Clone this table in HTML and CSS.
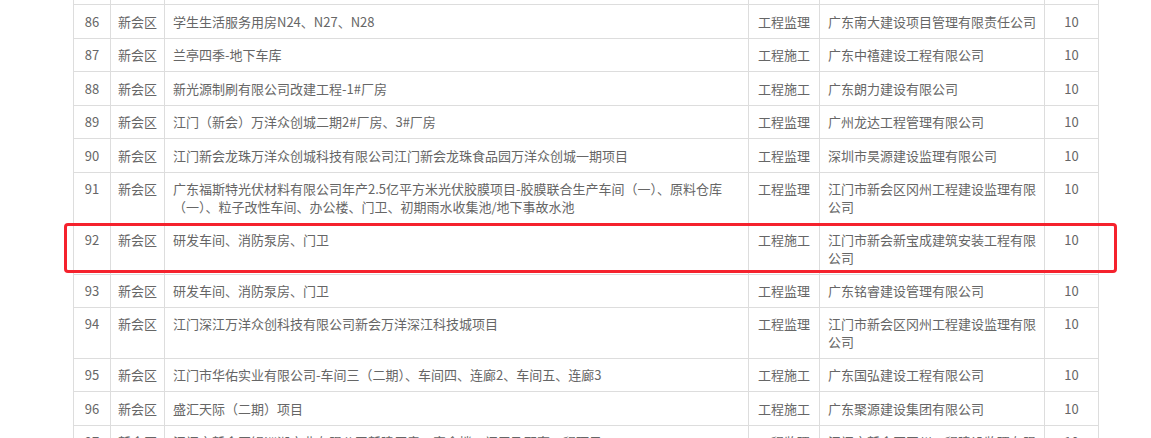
FILE: index.html
```html
<!DOCTYPE html>
<html lang="zh-CN">

<head>
    <meta charset="UTF-8">
    <meta name="viewport" content="width=device-width, initial-scale=1.0">
    <title>项目名单</title>
    <link rel="stylesheet" href="styles.css">
</head>

<body>
    <div class="list-wrap">
        <table class="list">
            <colgroup>
                <col class="c-no">
                <col class="c-area">
                <col class="c-name">
                <col class="c-type">
                <col class="c-company">
                <col class="c-score">
            </colgroup>
            <tbody>
                <tr>
                    <td class="center">85</td>
                    <td class="center">新会区</td>
                    <td>江门市新会区综合楼项目</td>
                    <td class="center">工程施工</td>
                    <td class="company">广东建设工程有限公司</td>
                    <td class="center">10</td>
                </tr>
                <tr>
                    <td class="center">86</td>
                    <td class="center">新会区</td>
                    <td>学生生活服务用房N24、N27、N28</td>
                    <td class="center">工程监理</td>
                    <td class="company">广东南大建设项目管理有限责任公司</td>
                    <td class="center">10</td>
                </tr>
                <tr>
                    <td class="center">87</td>
                    <td class="center">新会区</td>
                    <td>兰亭四季-地下车库</td>
                    <td class="center">工程施工</td>
                    <td class="company">广东中禧建设工程有限公司</td>
                    <td class="center">10</td>
                </tr>
                <tr>
                    <td class="center">88</td>
                    <td class="center">新会区</td>
                    <td>新光源制刷有限公司改建工程-1#厂房</td>
                    <td class="center">工程施工</td>
                    <td class="company">广东朗力建设有限公司</td>
                    <td class="center">10</td>
                </tr>
                <tr>
                    <td class="center">89</td>
                    <td class="center">新会区</td>
                    <td>江门（新会）万洋众创城二期2#厂房、3#厂房</td>
                    <td class="center">工程监理</td>
                    <td class="company">广州龙达工程管理有限公司</td>
                    <td class="center">10</td>
                </tr>
                <tr>
                    <td class="center">90</td>
                    <td class="center">新会区</td>
                    <td>江门新会龙珠万洋众创城科技有限公司江门新会龙珠食品园万洋众创城一期项目</td>
                    <td class="center">工程监理</td>
                    <td class="company">深圳市昊源建设监理有限公司</td>
                    <td class="center">10</td>
                </tr>
                <tr>
                    <td class="center">91</td>
                    <td class="center">新会区</td>
                    <td>广东福斯特光伏材料有限公司年产2.5亿平方米光伏胶膜项目-胶膜联合生产车间（一）、原料仓库（一）、粒子改性车间、办公楼、门卫、初期雨水收集池/地下事故水池</td>
                    <td class="center">工程监理</td>
                    <td class="company">江门市新会区冈州工程建设监理有限公司</td>
                    <td class="center">10</td>
                </tr>
                <tr>
                    <td class="center">92</td>
                    <td class="center">新会区</td>
                    <td>研发车间、消防泵房、门卫</td>
                    <td class="center">工程施工</td>
                    <td class="company">江门市新会新宝成建筑安装工程有限公司</td>
                    <td class="center">10</td>
                </tr>
                <tr>
                    <td class="center">93</td>
                    <td class="center">新会区</td>
                    <td>研发车间、消防泵房、门卫</td>
                    <td class="center">工程监理</td>
                    <td class="company">广东铭睿建设管理有限公司</td>
                    <td class="center">10</td>
                </tr>
                <tr>
                    <td class="center">94</td>
                    <td class="center">新会区</td>
                    <td>江门深江万洋众创科技有限公司新会万洋深江科技城项目</td>
                    <td class="center">工程监理</td>
                    <td class="company">江门市新会区冈州工程建设监理有限公司</td>
                    <td class="center">10</td>
                </tr>
                <tr>
                    <td class="center">95</td>
                    <td class="center">新会区</td>
                    <td>江门市华佑实业有限公司-车间三（二期）、车间四、连廊2、车间五、连廊3</td>
                    <td class="center">工程施工</td>
                    <td class="company">广东国弘建设工程有限公司</td>
                    <td class="center">10</td>
                </tr>
                <tr>
                    <td class="center">96</td>
                    <td class="center">新会区</td>
                    <td>盛汇天际（二期）项目</td>
                    <td class="center">工程施工</td>
                    <td class="company">广东聚源建设集团有限公司</td>
                    <td class="center">10</td>
                </tr>
                <tr>
                    <td class="center">97</td>
                    <td class="center">新会区</td>
                    <td>江门市新会区银洲湖实业有限公司新建厂房、宿舍楼、门卫及配套工程项目</td>
                    <td class="center">工程监理</td>
                    <td class="company">江门市新会区冈州工程建设监理有限公司</td>
                    <td class="center">10</td>
                </tr>
            </tbody>
        </table>
    </div>

    <!-- red mark around row 92 -->
    <div class="mark"></div>
</body>

</html>
```

FILE: styles.css
```css
body {
    margin: 0;
    padding: 0;
    background-color: #fff;
    font-family: "Noto Sans CJK SC", "Microsoft YaHei", sans-serif;
    font-size: 13px;
    color: #666;
    overflow: hidden;
}

.list-wrap {
    margin-top: -29px;
    margin-left: 73px;
    width: 1025px;
}

.list {
    width: 100%;
    table-layout: fixed;
    border-collapse: collapse;
}

.c-no {
    width: 37px;
}

.c-area {
    width: 54px;
}

.c-name {
    width: 584px;
}

.c-type {
    width: 71px;
}

.c-company {
    width: 225px;
}

.c-score {
    width: 54px;
}

.list td {
    border: 1px solid #ddd;
    padding: 7.5px 8px;
    line-height: 17.45px;
    vertical-align: top;
}

.list td.center {
    text-align: center;
    white-space: nowrap;
    padding-left: 0;
    padding-right: 0;
}

.list td.company {
    padding-right: 4px;
}

.mark {
    position: absolute;
    left: 64px;
    top: 223px;
    width: 1047px;
    height: 44px;
    border: 3px solid #f5222d;
    border-radius: 4px;
}
```
